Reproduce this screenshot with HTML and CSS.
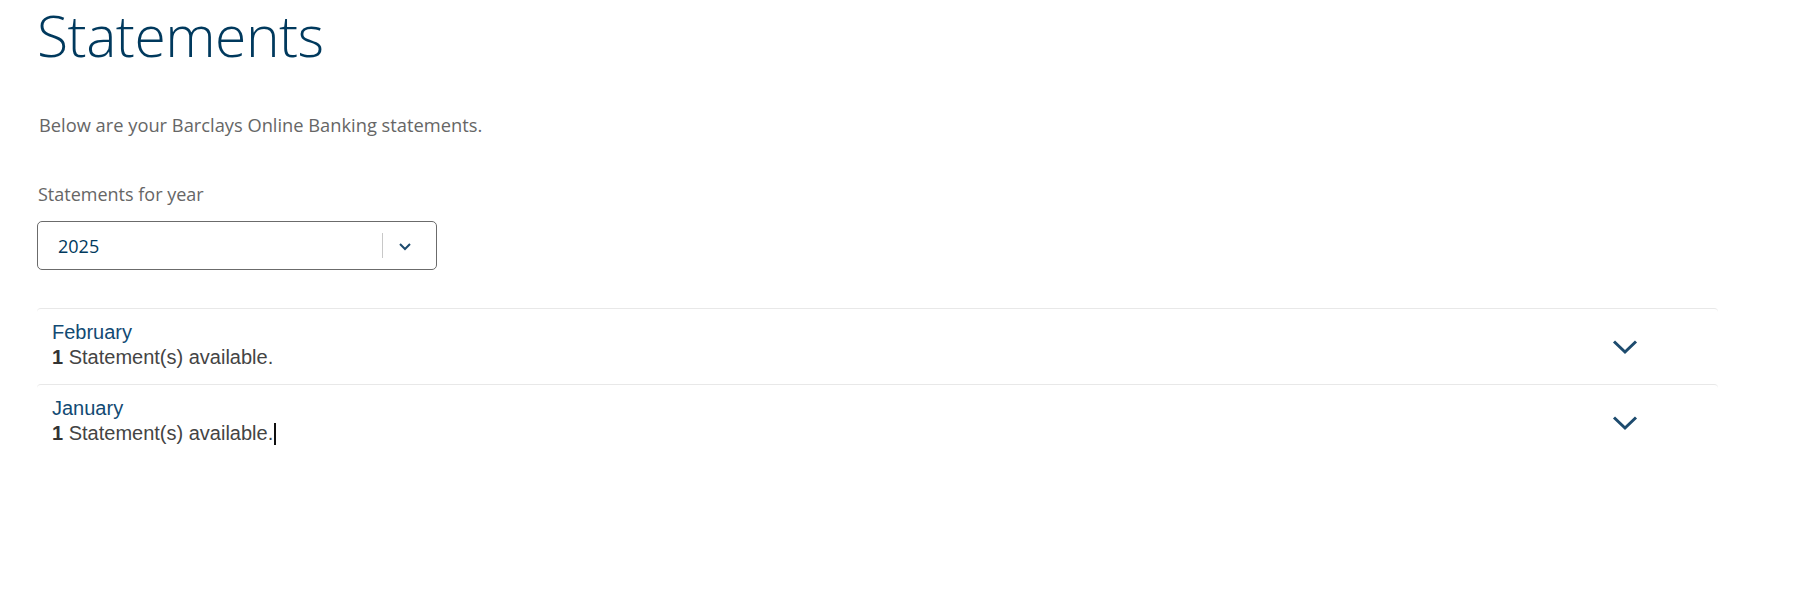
FILE: index.html
```html
<!DOCTYPE html>
<html>
<head>
  <title>Statements</title>
  <link rel="stylesheet" href="styles.css">
</head>
<body>
  <div class="page">
    <h1>Statements</h1>
    <p class="intro">Below are your Barclays Online Banking statements.</p>

    <label class="year-label" for="yearSelect">Statements for year</label>
    <div class="year-select" id="yearSelect">
      <span class="year-value">2025</span>
      <span class="year-divider"></span>
      <svg class="year-chevron" width="14" height="10" viewBox="0 0 14 10">
        <path d="M2 3 L7 8 L12 3" fill="none" stroke="#1d4b6e" stroke-width="2"/>
      </svg>
    </div>

    <ul class="months">
      <li class="month">
        <div class="month-text">
          <div class="month-name">February</div>
          <div class="month-count"><b>1</b> Statement(s) available.</div>
        </div>
        <svg class="month-chevron" width="26" height="16" viewBox="0 0 26 16">
          <path d="M2 2.5 L13 13 L24 2.5" fill="none" stroke="#1d4b6e" stroke-width="3"/>
        </svg>
      </li>
      <li class="month">
        <div class="month-text">
          <div class="month-name">January</div>
          <div class="month-count"><b>1</b> Statement(s) available.<span class="caret"></span></div>
        </div>
        <svg class="month-chevron" width="26" height="16" viewBox="0 0 26 16">
          <path d="M2 2.5 L13 13 L24 2.5" fill="none" stroke="#1d4b6e" stroke-width="3"/>
        </svg>
      </li>
    </ul>
  </div>
</body>
</html>
```

FILE: styles.css
```css
body {
  margin: 0;
  background-color: #fff;
  font-family: "Open Sans", "Noto Sans", sans-serif;
}

.page {
  padding: 0 100px 0 37px;
}

h1 {
  margin: 0;
  font-size: 57px;
  font-weight: 300;
  line-height: 70px;
  color: #00395d;
  letter-spacing: -0.5px;
}

.intro {
  margin: 43px 0 0 2px;
  font-size: 18.3px;
  line-height: 24px;
  color: #666;
}

.year-label {
  display: block;
  margin: 45px 0 0 1px;
  font-size: 18px;
  line-height: 24px;
  color: #666;
}

.year-select {
  display: flex;
  align-items: center;
  width: 398px;
  height: 47px;
  margin-top: 15px;
  border: 1px solid #6b6b6b;
  border-radius: 5px;
}

.year-value {
  flex: 1;
  padding-left: 20px;
  font-size: 18px;
  color: #00395d;
}

.year-divider {
  width: 1px;
  height: 25px;
  background-color: #c8c8c8;
}

.year-chevron {
  margin: 0 24px 0 15px;
}

.months {
  list-style-type: none;
  margin: 38px 0 0 0;
  padding: 0;
  width: 1681px;
}

.month {
  display: flex;
  align-items: center;
  height: 75px;
  border-top: 1px solid #e8e8e8;
  border-radius: 4px 4px 0 0;
}

.month-text {
  flex: 1;
  padding: 0 0 3px 15px;
  font-family: "Liberation Sans", Arial, sans-serif;
  font-size: 20px;
  line-height: 25px;
}

.month-name {
  color: #124a73;
}

.month-count {
  color: #444;
}

.month-count b {
  color: #333;
}

.caret {
  display: inline-block;
  width: 2px;
  height: 22px;
  margin-left: 1px;
  vertical-align: -5px;
  background-color: #111;
}

.month-chevron {
  margin-right: 80px;
}
```
